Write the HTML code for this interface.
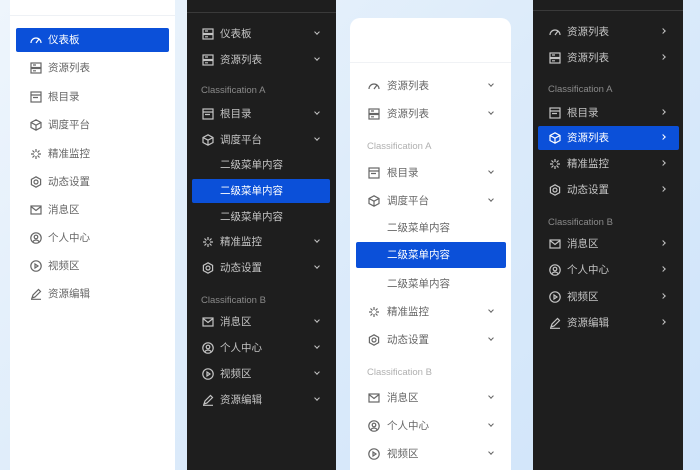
<!DOCTYPE html>
<html style="overflow:hidden;height:470px"><head><meta charset="utf-8"><style>
*{margin:0;padding:0;box-sizing:border-box}
body{width:700px;height:470px;overflow:hidden;position:relative;background:linear-gradient(135deg,#eef5fc 0%,#dcebfa 50%,#cfe4fa 100%);font-family:"Liberation Sans","Noto Sans CJK SC",sans-serif;font-size:10.5px}
.p{position:absolute;overflow:hidden}
.it{position:absolute;height:20px;line-height:20px;left:0;right:0}
.it svg{position:absolute;top:4px;width:12px;height:12px;fill:none;stroke:currentColor;stroke-width:1.2}
.it span{position:absolute}
.ch{position:absolute;top:7px;width:4px;height:4px;border-right:1.1px solid currentColor;border-bottom:1.1px solid currentColor;transform:rotate(45deg)}
.r{transform:rotate(-45deg)}
.cl{position:absolute;font-size:9.5px}
.act{position:absolute;background:#0b50d9;border-radius:2px}
.d{color:#c4c4c4}.d .cl{color:#8a8a8a}
.w{color:#666}.w .cl{color:#b0b0b0}
</style></head><body>
<svg width="0" height="0" style="position:absolute">
<defs>
<symbol id="g" viewBox="0 0 12 12"><path d="M1 9a5 5 0 0 1 10 0M6 9l3-4"/></symbol>
<symbol id="l" viewBox="0 0 12 12"><rect x="1" y="1" width="10" height="4.5"/><rect x="1" y="6.5" width="10" height="4.5"/><path d="M3 3h3M3 8.8h3"/></symbol>
<symbol id="f" viewBox="0 0 12 12"><rect x="1" y="1" width="10" height="10"/><path d="M1 4h10M3 6.5h5"/></symbol>
<symbol id="c" viewBox="0 0 12 12"><path d="M6 0.8l5 2.7v5L6 11.2 1 8.5v-5zM1 3.5l5 2.7 5-2.7M6 6.2v5"/></symbol>
<symbol id="s" viewBox="0 0 12 12"><path d="M6 1v3M6 8v3M1 6h3M8 6h3M2.5 2.5l2 2M7.5 7.5l2 2M9.5 2.5l-2 2M4.5 7.5l-2 2"/></symbol>
<symbol id="h" viewBox="0 0 12 12"><path d="M6 0.8l4.6 2.6v5.2L6 11.2 1.4 8.6V3.4z"/><circle cx="6" cy="6" r="2"/></symbol>
<symbol id="m" viewBox="0 0 12 12"><rect x="1" y="2" width="10" height="8"/><path d="M1 2.5l5 4 5-4"/></symbol>
<symbol id="u" viewBox="0 0 12 12"><circle cx="6" cy="6" r="5.2"/><circle cx="6" cy="5" r="1.8"/><path d="M3 9.5a3.5 3 0 0 1 6 0"/></symbol>
<symbol id="v" viewBox="0 0 12 12"><circle cx="6" cy="6" r="5.2"/><path d="M5 4v4l3-2z"/></symbol>
<symbol id="e" viewBox="0 0 12 12"><path d="M2 10l1-3 5.5-5.5 2 2L5 9zM1 11.3h10"/></symbol>
</defs></svg>

<!-- Panel 1 -->
<div class="p w" style="left:10px;top:0;width:165px;height:470px;background:#fff">
<div style="position:absolute;left:0;right:0;top:15px;height:1px;background:#eef1f5"></div>
<div class="act" style="left:6px;top:28px;width:153px;height:24px"></div>
<div class="it" style="top:30px;color:#fff"><svg style="left:20px"><use href="#g"/></svg><span style="left:38px">仪表板</span></div>
<div class="it" style="top:58px"><svg style="left:20px"><use href="#l"/></svg><span style="left:38px">资源列表</span></div>
<div class="it" style="top:87px"><svg style="left:20px"><use href="#f"/></svg><span style="left:38px">根目录</span></div>
<div class="it" style="top:115px"><svg style="left:20px"><use href="#c"/></svg><span style="left:38px">调度平台</span></div>
<div class="it" style="top:144px"><svg style="left:20px"><use href="#s"/></svg><span style="left:38px">精准监控</span></div>
<div class="it" style="top:172px"><svg style="left:20px"><use href="#h"/></svg><span style="left:38px">动态设置</span></div>
<div class="it" style="top:200px"><svg style="left:20px"><use href="#m"/></svg><span style="left:38px">消息区</span></div>
<div class="it" style="top:228px"><svg style="left:20px"><use href="#u"/></svg><span style="left:38px">个人中心</span></div>
<div class="it" style="top:256px"><svg style="left:20px"><use href="#v"/></svg><span style="left:38px">视频区</span></div>
<div class="it" style="top:284px"><svg style="left:20px"><use href="#e"/></svg><span style="left:38px">资源编辑</span></div>
</div>

<!-- Panel 2 -->
<div class="p d" style="left:187px;top:0;width:149px;height:470px;background:#1e1e1e">
<div style="position:absolute;left:0;right:0;top:12px;height:1px;background:#3a3a3a"></div>
<div class="it" style="top:24px"><svg style="left:15px"><use href="#l"/></svg><span style="left:33px">仪表板</span><i class="ch" style="left:128px;top:6px"></i></div>
<div class="it" style="top:50px"><svg style="left:15px"><use href="#l"/></svg><span style="left:33px">资源列表</span><i class="ch" style="left:128px;top:6px"></i></div>
<div class="cl" style="left:14px;top:85px">Classification A</div>
<div class="it" style="top:104px"><svg style="left:15px"><use href="#f"/></svg><span style="left:33px">根目录</span><i class="ch" style="left:128px;top:6px"></i></div>
<div class="it" style="top:130px"><svg style="left:15px"><use href="#c"/></svg><span style="left:33px">调度平台</span><i class="ch" style="left:128px;top:6px"></i></div>
<div class="it" style="top:155px"><span style="left:33px">二级菜单内容</span></div>
<div class="act" style="left:5px;top:179px;width:138px;height:24px"></div>
<div class="it" style="top:181px;color:#fff"><span style="left:33px">二级菜单内容</span></div>
<div class="it" style="top:207px"><span style="left:33px">二级菜单内容</span></div>
<div class="it" style="top:232px"><svg style="left:15px"><use href="#s"/></svg><span style="left:33px">精准监控</span><i class="ch" style="left:128px;top:6px"></i></div>
<div class="it" style="top:258px"><svg style="left:15px"><use href="#h"/></svg><span style="left:33px">动态设置</span><i class="ch" style="left:128px;top:6px"></i></div>
<div class="cl" style="left:14px;top:295px">Classification B</div>
<div class="it" style="top:312px"><svg style="left:15px"><use href="#m"/></svg><span style="left:33px">消息区</span><i class="ch" style="left:128px;top:6px"></i></div>
<div class="it" style="top:338px"><svg style="left:15px"><use href="#u"/></svg><span style="left:33px">个人中心</span><i class="ch" style="left:128px;top:6px"></i></div>
<div class="it" style="top:364px"><svg style="left:15px"><use href="#v"/></svg><span style="left:33px">视频区</span><i class="ch" style="left:128px;top:6px"></i></div>
<div class="it" style="top:390px"><svg style="left:15px"><use href="#e"/></svg><span style="left:33px">资源编辑</span><i class="ch" style="left:128px;top:6px"></i></div>
</div>

<!-- Panel 3 -->
<div class="p w" style="left:350px;top:18px;width:161px;height:452px;background:#fff;border-radius:10px 10px 0 0">
<div style="position:absolute;left:0;right:0;top:44px;height:1px;background:#f0f2f5"></div>
<div class="it" style="top:58px"><svg style="left:18px"><use href="#g"/></svg><span style="left:37px">资源列表</span><i class="ch" style="left:139px;top:6px"></i></div>
<div class="it" style="top:86px"><svg style="left:18px"><use href="#l"/></svg><span style="left:37px">资源列表</span><i class="ch" style="left:139px;top:6px"></i></div>
<div class="cl" style="left:17px;top:123px">Classification A</div>
<div class="it" style="top:145px"><svg style="left:18px"><use href="#f"/></svg><span style="left:37px">根目录</span><i class="ch" style="left:139px;top:6px"></i></div>
<div class="it" style="top:173px"><svg style="left:18px"><use href="#c"/></svg><span style="left:37px">调度平台</span><i class="ch" style="left:139px;top:6px"></i></div>
<div class="it" style="top:200px"><span style="left:37px">二级菜单内容</span></div>
<div class="act" style="left:6px;top:224px;width:150px;height:26px"></div>
<div class="it" style="top:227px;color:#fff"><span style="left:37px">二级菜单内容</span></div>
<div class="it" style="top:256px"><span style="left:37px">二级菜单内容</span></div>
<div class="it" style="top:284px"><svg style="left:18px"><use href="#s"/></svg><span style="left:37px">精准监控</span><i class="ch" style="left:139px;top:6px"></i></div>
<div class="it" style="top:312px"><svg style="left:18px"><use href="#h"/></svg><span style="left:37px">动态设置</span><i class="ch" style="left:139px;top:6px"></i></div>
<div class="cl" style="left:17px;top:349px">Classification B</div>
<div class="it" style="top:370px"><svg style="left:18px"><use href="#m"/></svg><span style="left:37px">消息区</span><i class="ch" style="left:139px;top:6px"></i></div>
<div class="it" style="top:398px"><svg style="left:18px"><use href="#u"/></svg><span style="left:37px">个人中心</span><i class="ch" style="left:139px;top:6px"></i></div>
<div class="it" style="top:426px"><svg style="left:18px"><use href="#v"/></svg><span style="left:37px">视频区</span><i class="ch" style="left:139px;top:6px"></i></div>
</div>

<!-- Panel 4 -->
<div class="p d" style="left:533px;top:0;width:150px;height:470px;background:#1e1e1e">
<div style="position:absolute;left:0;right:0;top:10px;height:1px;background:#3a3a3a"></div>
<div class="it" style="top:22px"><svg style="left:16px"><use href="#g"/></svg><span style="left:34px">资源列表</span><i class="ch r" style="left:128px"></i></div>
<div class="it" style="top:48px"><svg style="left:16px"><use href="#l"/></svg><span style="left:34px">资源列表</span><i class="ch r" style="left:128px"></i></div>
<div class="cl" style="left:15px;top:84px">Classification A</div>
<div class="it" style="top:103px"><svg style="left:16px"><use href="#f"/></svg><span style="left:34px">根目录</span><i class="ch r" style="left:128px"></i></div>
<div class="act" style="left:5px;top:126px;width:141px;height:24px"></div>
<div class="it" style="top:128px;color:#fff"><svg style="left:16px"><use href="#c"/></svg><span style="left:34px">资源列表</span><i class="ch r" style="left:128px"></i></div>
<div class="it" style="top:154px"><svg style="left:16px"><use href="#s"/></svg><span style="left:34px">精准监控</span><i class="ch r" style="left:128px"></i></div>
<div class="it" style="top:180px"><svg style="left:16px"><use href="#h"/></svg><span style="left:34px">动态设置</span><i class="ch r" style="left:128px"></i></div>
<div class="cl" style="left:15px;top:217px">Classification B</div>
<div class="it" style="top:234px"><svg style="left:16px"><use href="#m"/></svg><span style="left:34px">消息区</span><i class="ch r" style="left:128px"></i></div>
<div class="it" style="top:260px"><svg style="left:16px"><use href="#u"/></svg><span style="left:34px">个人中心</span><i class="ch r" style="left:128px"></i></div>
<div class="it" style="top:287px"><svg style="left:16px"><use href="#v"/></svg><span style="left:34px">视频区</span><i class="ch r" style="left:128px"></i></div>
<div class="it" style="top:313px"><svg style="left:16px"><use href="#e"/></svg><span style="left:34px">资源编辑</span><i class="ch r" style="left:128px"></i></div>
</div>
</body></html>
